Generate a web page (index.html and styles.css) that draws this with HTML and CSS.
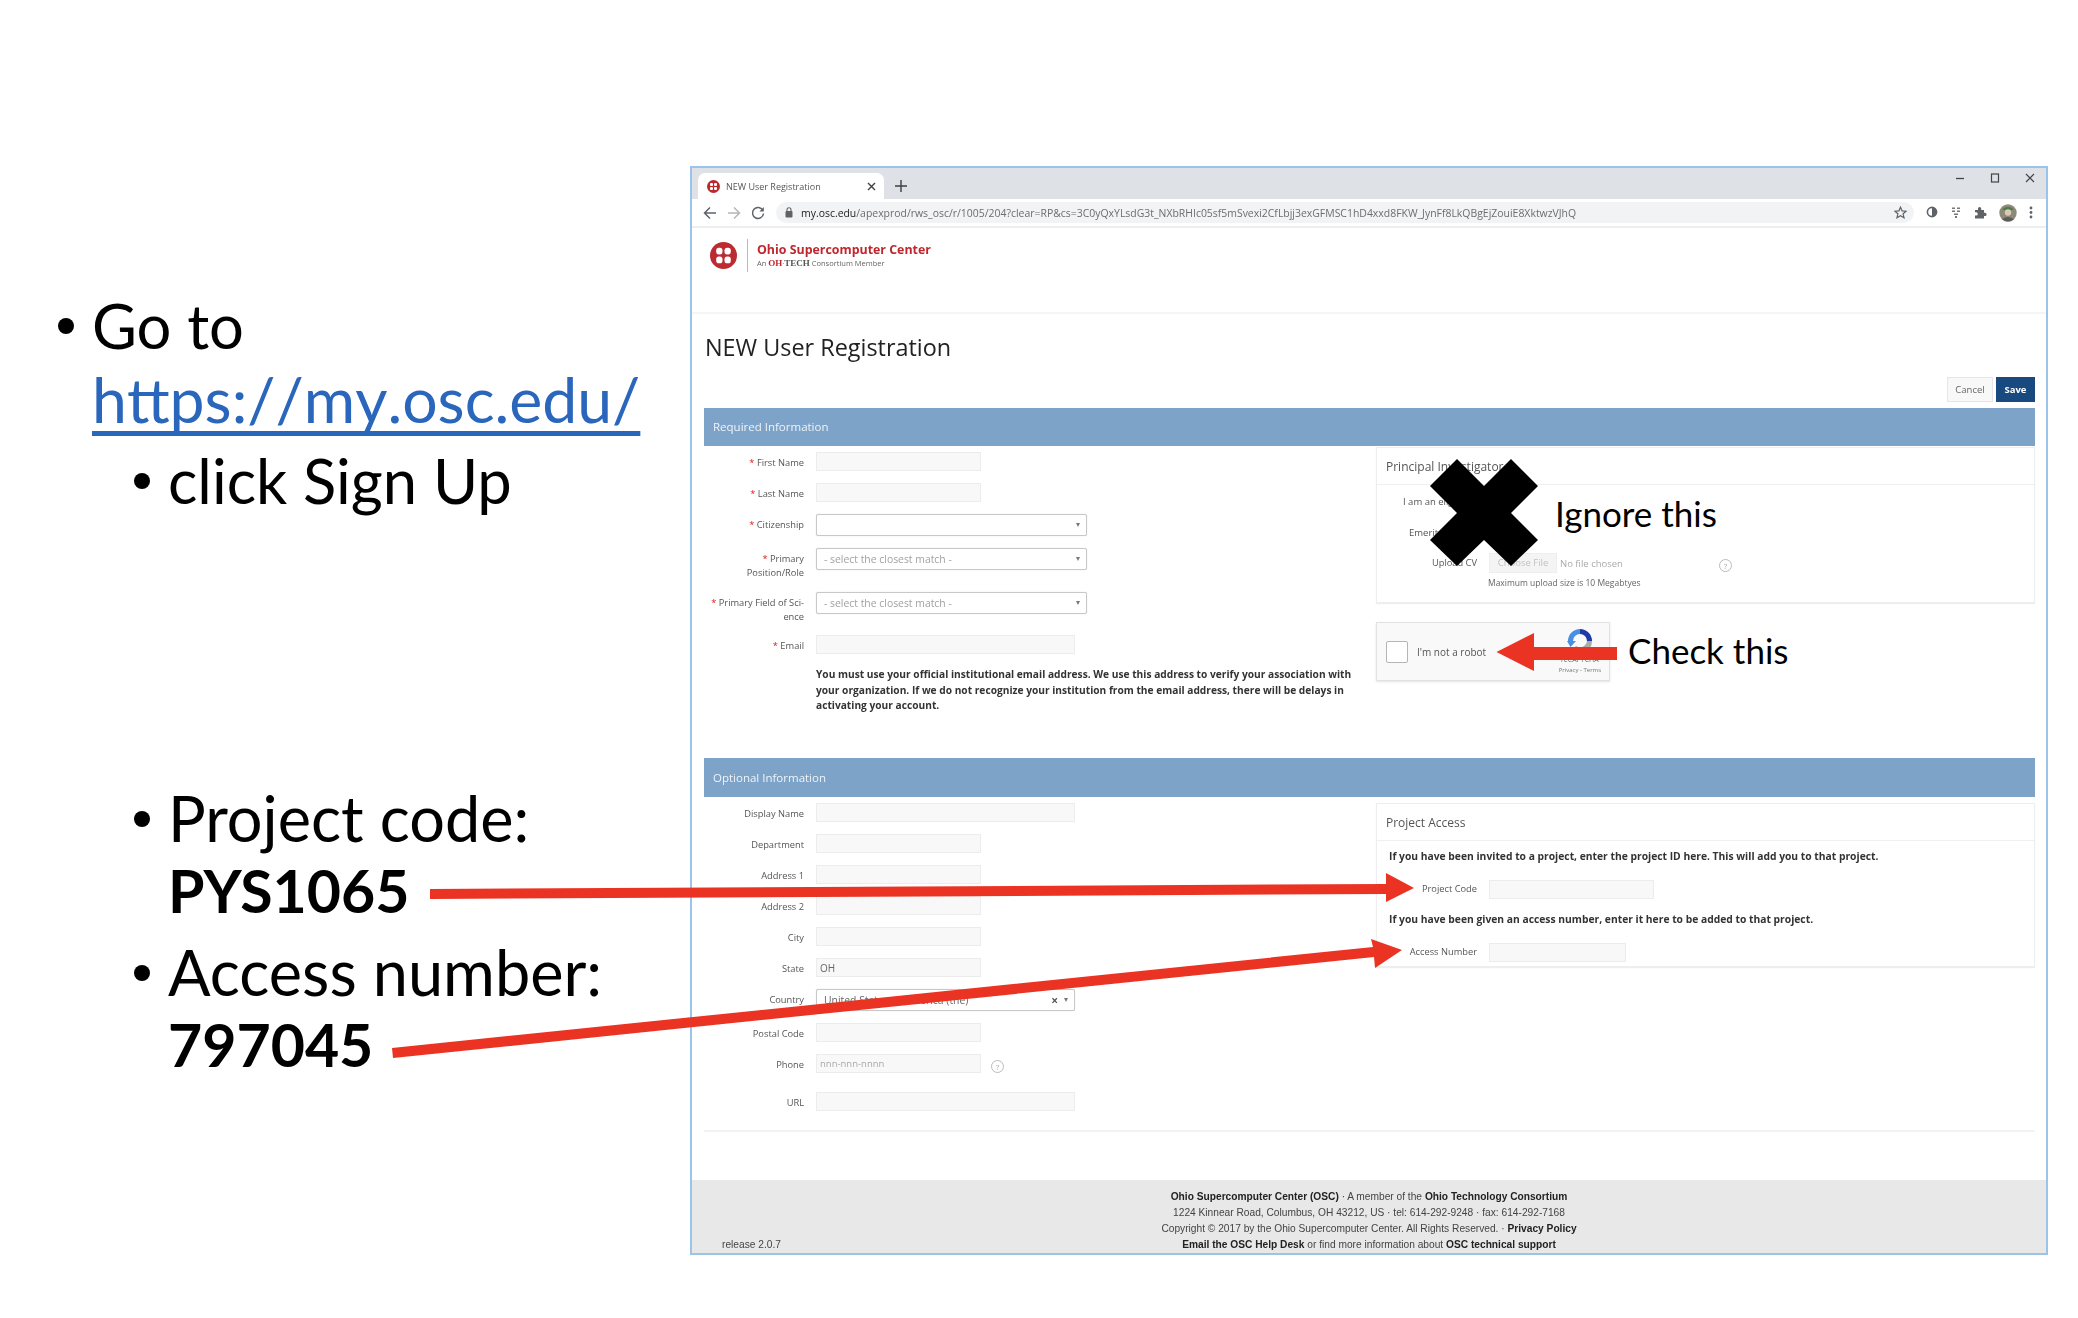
FILE: index.html
```html
<!DOCTYPE html>
<html>

<head>
    <meta charset="utf-8">
    <title>NEW User Registration</title>
    <link rel="stylesheet" href="styles.css">
</head>

<body>

<div class="slide">

    <!-- left side of the slide -->
    <div class="notes">
        <div class="item">
            <div>
                <div>Go to</div>
                <div><a class="link">https://my.osc.edu/</a></div>
            </div>
        </div>
        <div class="item sub"><div>click Sign Up</div></div>
        <div class="item sub gap-big big">
            <div>
                <div>Project code:</div>
                <div><b>PYS1065</b></div>
            </div>
        </div>
        <div class="item sub gap-small big">
            <div>
                <div>Access number:</div>
                <div><b>797045</b></div>
            </div>
        </div>
    </div>

    <!-- screenshot of the browser -->
    <div class="browser">

        <div class="tabstrip">
            <div class="tab">
                <svg class="favicon" width="13" height="13" viewBox="0 0 26 26"><circle cx="13" cy="13" r="13" fill="#c0272d"/><rect x="6" y="6" width="6" height="6" rx="2" fill="#fff"/><rect x="14" y="6" width="6" height="6" rx="2" fill="#fff"/><rect x="6" y="14" width="6" height="6" rx="2" fill="#fff"/><rect x="14" y="14" width="6" height="6" rx="2" fill="#fff"/></svg>
                <span class="tab-title">NEW User Registration</span>
                <svg class="tab-close" width="9" height="9" viewBox="0 0 9 9"><path d="M1 1 8 8M8 1 1 8" stroke="#3c4043" stroke-width="1.4"/></svg>
            </div>
            <svg class="tab-new" width="12" height="12" viewBox="0 0 12 12"><path d="M6 0V12M0 6H12" stroke="#3c4043" stroke-width="1.4"/></svg>
            <div class="winctl">
                <svg width="10" height="10" viewBox="0 0 10 10"><path d="M1 5.500H9" stroke="#444" stroke-width="1.3"/></svg>
                <svg width="10" height="10" viewBox="0 0 10 10"><rect x="1.5" y="1" width="7" height="8" fill="none" stroke="#444" stroke-width="1.2"/></svg>
                <svg width="10" height="10" viewBox="0 0 10 10"><path d="M1 1 9 9M9 1 1 9" stroke="#444" stroke-width="1.1"/></svg>
            </div>
        </div>

        <div class="toolbar">
            <svg width="14" height="14" viewBox="0 0 14 14"><path d="M13 7H2M7 1.500 1.500 7 7 12.500" fill="none" stroke="#5f6368" stroke-width="1.5"/></svg>
            <svg width="14" height="14" viewBox="0 0 14 14"><path d="M1 7H12M7 1.500 12.500 7 7 12.500" fill="none" stroke="#b4b7bb" stroke-width="1.5"/></svg>
            <svg width="14" height="14" viewBox="0 0 14 14"><path d="M11.800 4.200A5.500 5.500 0 1 0 12.500 7.500" fill="none" stroke="#5f6368" stroke-width="1.5"/><path d="M12.800 1V5.400H8.400Z" fill="#5f6368"/></svg>
            <div class="address">
                <svg width="8" height="11" viewBox="0 0 8 11"><rect x="0.5" y="4" width="7" height="6.5" rx="1" fill="#5f6368"/><path d="M2 4.500V2.800a2 2 0 0 1 4 0V4.500" fill="none" stroke="#5f6368" stroke-width="1.1"/></svg>
                <span class="url"><span class="url-host">my.osc.edu</span>/apexprod/rws_osc/r/1005/204?clear=RP&amp;cs=3C0yQxYLsdG3t_NXbRHIc05sf5mSvexi2CfLbjj3exGFMSC1hD4xxd8FKW_JynFf8LkQBgEjZouiE8XktwzVJhQ</span>
                <svg class="star" width="13" height="13" viewBox="0 0 14 14"><path d="M7 1.300 8.700 5.200 13 5.600 9.800 8.400 10.800 12.600 7 10.400 3.200 12.600 4.200 8.400 1 5.600 5.300 5.200Z" fill="none" stroke="#5f6368" stroke-width="1.3"/></svg>
            </div>
            <div class="ext">
                <svg width="12" height="13" viewBox="0 0 12 13"><circle cx="6" cy="6" r="4.600" fill="#fff" stroke="#5f6368" stroke-width="1.6"/><path d="M6 1.500A4.500 4.500 0 0 1 6 10.500Z" fill="#5f6368"/></svg>
                <svg width="12" height="13" viewBox="0 0 12 13"><path d="M2 1.500H5V3H2ZM7 1.500H10V3H7ZM2 4.500H5V6H2ZM7 4.500H10V6H7ZM4 7.500H8V9H4ZM5 10H7V12H5Z" fill="#777"/></svg>
                <svg width="13" height="13" viewBox="0 0 13 13"><path d="M1 4H4V2.500a1.600 1.600 0 0 1 3.200 0V4H10V6.800H11a1.600 1.600 0 0 1 0 3.200H10V12.500H1V9.500H2.200a1.600 1.600 0 0 0 0-3.200H1Z" fill="#5f6368"/></svg>
                <svg width="18" height="18" viewBox="0 0 18 18"><circle cx="9" cy="9" r="8.700" fill="#8d8a78"/><path d="M3 5.500A8.700 8.700 0 0 1 15 5.500L12 6 6 6Z" fill="#4e7a45"/><circle cx="9" cy="8.500" r="3.200" fill="#d8c8b8"/><path d="M3.500 15.500C5 12 13 12 14.500 15.500A8.700 8.700 0 0 1 3.500 15.500Z" fill="#5c5c5c"/></svg>
                <svg width="4" height="13" viewBox="0 0 4 13"><circle cx="2" cy="2" r="1.400" fill="#5f6368"/><circle cx="2" cy="6.500" r="1.400" fill="#5f6368"/><circle cx="2" cy="11" r="1.400" fill="#5f6368"/></svg>
            </div>
        </div>

        <div class="site-header">
            <svg class="site-logo" width="27" height="27" viewBox="0 0 26 26"><circle cx="13" cy="13" r="13" fill="#bd2b32"/><rect x="6" y="5.500" width="6" height="6.500" rx="2.500" fill="#fff"/><rect x="14" y="5.500" width="6" height="6.500" rx="2.500" fill="#fff"/><rect x="6" y="14" width="6" height="6.500" rx="2.500" fill="#fff"/><rect x="14" y="14" width="6" height="6.500" rx="2.500" fill="#fff"/></svg>
            <div class="site-name">
                <div class="site-title">Ohio Supercomputer Center</div>
                <div class="site-sub">An <span class="oh">OH</span>·<span class="tech">TECH</span> Consortium Member</div>
            </div>
        </div>

        <div class="page">

            <h1 class="page-title">NEW User Registration</h1>

            <div class="actions">
                <span class="btn btn-cancel">Cancel</span>
                <span class="btn btn-save">Save</span>
            </div>

            <div class="bar">Required Information</div>
            <div class="columns columns-req">
                <div class="col-left">
                    <div class="row"><label class="lbl"><i>*</i> First Name</label><span class="field w165"></span></div>
                    <div class="row"><label class="lbl"><i>*</i> Last Name</label><span class="field w165"></span></div>
                    <div class="row"><label class="lbl"><i>*</i> Citizenship</label><span class="select w271"></span></div>
                    <div class="row tall"><label class="lbl"><i>*</i> Primary Position/Role</label><span class="select w271">- select the closest match -</span></div>
                    <div class="row tall-b"><label class="lbl"><i>*</i> Primary Field of Sci-<br>ence</label><span class="select w271">- select the closest match -</span></div>
                    <div class="row"><label class="lbl"><i>*</i> Email</label><span class="field w259"></span></div>
                    <p class="note">You must use your official institutional email address. We use this address to verify your association with<br>your organization. If we do not recognize your institution from the email address, there will be delays in<br>activating your account.</p>
                </div>
                <div class="col-right">
                    <div class="panel panel-pi">
                        <div class="panel-head">Principal Investigator</div>
                        <div class="panel-body">
                            <div class="pi-row">I am an eligible PI</div>
                            <div class="pi-row">Emeritus PI</div>
                            <div class="upload">
                                <label class="lbl">Upload CV</label>
                                <span class="choose">Choose File</span>
                                <span class="nofile">No file chosen</span>
                                <span class="help help-cv">?</span>
                            </div>
                            <div class="maxsize">Maximum upload size is 10 Megabtyes</div>
                        </div>
                    </div>
                    <div class="captcha">
                        <span class="captcha-box"></span>
                        <span class="captcha-text">I'm not a robot</span>
                        <div class="captcha-brand">
                            <svg width="26" height="26" viewBox="0 0 26 26"><path d="M13 1A12 12 0 0 1 25 13L20 13A7 7 0 0 0 13 6Z" fill="#1c3aa9"/><path d="M1 13A12 12 0 0 1 13 1V6A7 7 0 0 0 6 13L9 13 3.500 19 0 13Z" fill="#4a90e2"/><path d="M25 13A12 12 0 0 1 5 22L9 18A7 7 0 0 0 20 13Z" fill="#ababab"/></svg>
                            <div class="captcha-name">reCAPTCHA</div>
                            <div class="captcha-links">Privacy - Terms</div>
                        </div>
                    </div>
                </div>
            </div>

            <div class="bar bar-opt">Optional Information</div>
            <div class="columns">
                <div class="col-left">
                    <div class="row"><label class="lbl">Display Name</label><span class="field w259"></span></div>
                    <div class="row"><label class="lbl">Department</label><span class="field w165"></span></div>
                    <div class="row"><label class="lbl">Address 1</label><span class="field w165"></span></div>
                    <div class="row"><label class="lbl">Address 2</label><span class="field w165"></span></div>
                    <div class="row"><label class="lbl">City</label><span class="field w165"></span></div>
                    <div class="row"><label class="lbl">State</label><span class="field w165">OH</span></div>
                    <div class="row"><label class="lbl">Country</label><span class="select select-country w259">United States of America (the)<span class="clear">×</span></span></div>
                    <div class="row"><label class="lbl">Postal Code</label><span class="field w165"></span></div>
                    <div class="row phone"><label class="lbl">Phone</label><span class="field w165 hint">nnn-nnn-nnnn</span><span class="help">?</span></div>
                    <div class="row"><label class="lbl">URL</label><span class="field w259"></span></div>
                </div>
                <div class="col-right">
                    <div class="panel panel-access">
                        <div class="panel-head">Project Access</div>
                        <div class="panel-body">
                            <p class="access-note">If you have been invited to a project, enter the project ID here. This will add you to that project.</p>
                            <div class="access-row"><label class="lbl">Project Code</label><span class="field w165"></span></div>
                            <p class="access-note">If you have been given an access number, enter it here to be added to that project.</p>
                            <div class="access-row"><label class="lbl">Access Number</label><span class="field w137"></span></div>
                        </div>
                    </div>
                </div>
            </div>

            <div class="rule"></div>
        </div>

        <div class="footer">
            <div class="release">release 2.0.7</div>
            <div class="footer-text">
                <div><b>Ohio Supercomputer Center (OSC)</b> · A member of the <b>Ohio Technology Consortium</b></div>
                <div>1224 Kinnear Road, Columbus, OH 43212, US · tel: 614-292-9248 · fax: 614-292-7168</div>
                <div>Copyright © 2017 by the Ohio Supercomputer Center. All Rights Reserved. · <b>Privacy Policy</b></div>
                <div><b>Email the OSC Help Desk</b> or find more information about <b>OSC technical support</b></div>
            </div>
        </div>
    </div>

    <!-- things drawn on top of the slide -->
    <svg class="overlay" width="2078" height="1318" viewBox="0 0 2078 1318">
        <path d="M1457 459 1484 486 1511 459 1538 486 1511 513 1538 540 1511 566 1484 540 1457 566 1430 540 1457 513 1430 486Z" fill="#000"/>
        <path d="M1617 647H1534V633L1496.500 652 1534 671V660H1617Z" fill="#ea3323"/>
        <path d="M430 889 1386 884V873L1414 888 1386 902V894L430 899Z" fill="#ea3323"/>
        <path d="M392 1048 1373 947 1371 939 1402 950 1375 968 1374 957 393 1058Z" fill="#ea3323"/>
    </svg>
    <div class="callout callout-ignore">Ignore this</div>
    <div class="callout callout-check">Check this</div>

</div>

</body>

</html>
```

FILE: styles.css
```css
body {
    margin: 0;
    background-color: #ffffff;
    font-family: "Open Sans", sans-serif;
}

.slide {
    position: relative;
    display: flex;
    width: 2078px;
    height: 1318px;
    overflow: hidden;
}

/* left column */
.notes {
    box-sizing: border-box;
    flex: none;
    width: 690px;
    padding: 289px 0 0 58px;
    font-family: Lato, sans-serif;
    font-size: 61.5px;
    line-height: 73px;
    color: #000000;
}
.big {
    font-size: 63px;
    line-height: 71px;
}
.notes b {
    font-size: 59px;
}
.item {
    display: flex;
    gap: 18px;
}
.item::before {
    content: "";
    flex: none;
    width: 16px;
    height: 16px;
    margin-top: 29px;
    border-radius: 50%;
    background-color: #000000;
}
.sub {
    margin: 8px 0 0 76px;
}
.gap-big {
    margin-top: 265px;
}
.gap-small {
    margin-top: 10px;
}
.link {
    color: #2a66bb;
    font-size: 62.5px;
    font-kerning: none;
    text-decoration: underline 5px;
    text-decoration-skip-ink: none;
    text-underline-offset: 8px;
}

/* browser window */
.browser {
    display: flex;
    flex-direction: column;
    flex: none;
    box-sizing: border-box;
    width: 1358px;
    height: 1089px;
    margin-top: 166px;
    border: 2px solid #9cc3ea;
    background-color: #ffffff;
    color: #555555;
    filter: blur(0.4px);
}
.browser svg {
    flex: none;
}
.tabstrip {
    display: flex;
    align-items: center;
    flex: none;
    height: 31px;
    background-color: #dee1e6;
}
.tab {
    display: flex;
    align-items: center;
    box-sizing: border-box;
    width: 186px;
    height: 26px;
    margin: 5px 0 0 6px;
    padding: 0 8px 0 9px;
    border-radius: 7px 7px 0 0;
    background-color: #ffffff;
}
.tab-title {
    margin-left: 6px;
    font-size: 9px;
    color: #555555;
}
.tab-close {
    margin-left: auto;
}
.tab-new {
    margin: 5px 0 0 11px;
}
.winctl {
    display: flex;
    gap: 25px;
    margin: -11px 11px 0 auto;
}
.toolbar {
    display: flex;
    align-items: center;
    flex: none;
    gap: 10px;
    box-sizing: border-box;
    height: 29px;
    padding: 0 0 0 11px;
    border-bottom: 2px solid #eceef0;
}
.address {
    display: flex;
    align-items: center;
    flex: none;
    box-sizing: border-box;
    width: 1138px;
    height: 21px;
    margin-left: 1px;
    padding: 0 7px 0 9px;
    border-radius: 11px;
    background-color: #f1f3f4;
}
.url {
    margin-left: 8px;
    font-size: 10.45px;
    color: #6b6e72;
    white-space: nowrap;
}
.url-host {
    color: #202124;
}
.star {
    margin-left: auto;
}
.ext {
    display: flex;
    align-items: center;
    gap: 12px;
    margin-left: 2px;
}
.site-header {
    display: flex;
    align-items: center;
    flex: none;
    box-sizing: border-box;
    height: 86px;
    padding: 0 0 30px 18px;
    border-bottom: 2px solid #f5f5f5;
}
.site-logo {
    margin-right: 10px;
}
.site-name {
    height: 33px;
    padding-left: 9px;
    border-left: 1px solid #bbbbbb;
}
.site-title {
    margin-top: 3px;
    font-size: 12.4px;
    font-weight: 700;
    line-height: 16px;
    color: #c0272d;
    white-space: nowrap;
}
.site-sub {
    font-size: 7.5px;
    line-height: 11px;
    color: #666666;
}
.oh {
    font-family: "Liberation Serif", serif;
    font-size: 9px;
    font-weight: 700;
    color: #c0272d;
}
.tech {
    font-family: "Liberation Serif", serif;
    font-size: 9px;
    font-weight: 700;
    color: #555555;
}
.page {
    flex: 1;
    padding: 0 11px 0 12px;
}
.page-title {
    box-sizing: border-box;
    height: 63px;
    margin: 0;
    padding: 17px 0 0 1px;
    font-size: 23.4px;
    font-weight: 400;
    line-height: 32px;
    color: #222222;
}
.actions {
    display: flex;
    justify-content: flex-end;
    gap: 3px;
    height: 25px;
    margin-bottom: 6px;
}
.btn {
    display: flex;
    align-items: center;
    justify-content: center;
    box-sizing: border-box;
    font-size: 9.5px;
}
.btn-cancel {
    width: 46px;
    border: 1px solid #e6e6e6;
    background-color: #f8f8f8;
    color: #666666;
}
.btn-save {
    width: 39px;
    background-color: #184a80;
    color: #ffffff;
    font-weight: 700;
}
.bar {
    box-sizing: border-box;
    height: 38px;
    padding-left: 9px;
    background-color: #7da3c8;
    color: #eef3f8;
    font-size: 11.5px;
    line-height: 38px;
}
.bar-opt {
    height: 39px;
    line-height: 39px;
}
.columns {
    display: flex;
}
.columns-req {
    height: 312px;
}
.col-left {
    flex: none;
    width: 672px;
    padding-top: 6px;
}
.col-right {
    flex: 1;
}

/* form rows */
.row {
    display: flex;
    align-items: flex-start;
    margin-bottom: 12px;
}
.tall {
    height: 32px;
}
.tall-b {
    height: 31px;
}
.phone {
    height: 26px;
}
.lbl {
    flex: none;
    box-sizing: border-box;
    width: 100px;
    margin-right: 12px;
    padding-top: 3.5px;
    font-size: 9.3px;
    line-height: 14px;
    text-align: right;
    color: #555555;
}
.lbl i {
    font-style: normal;
    color: #e0141c;
}
.field {
    box-sizing: border-box;
    height: 19px;
    padding-left: 3px;
    border: 1px solid #ececec;
    background-color: #f8f8f8;
    font-size: 10px;
    line-height: 18px;
    color: #666666;
}
.w137 { width: 137px; }
.w165 { width: 165px; }
.w259 { width: 259px; }
.w271 { width: 271px; }
.hint {
    color: #aaaaaa;
    font-size: 9.5px;
}
.select {
    position: relative;
    box-sizing: border-box;
    height: 22px;
    padding-left: 7px;
    border: 1px solid #c8c8c8;
    border-radius: 2px;
    box-shadow: 0 0 1px #cccccc;
    background-color: #ffffff;
    font-size: 10.4px;
    line-height: 21px;
    color: #a2a2a2;
}
.select::after {
    content: "";
    position: absolute;
    top: 8px;
    right: 6px;
    border-top: 4px solid #777777;
    border-left: 2.5px solid transparent;
    border-right: 2.5px solid transparent;
}
.select-country {
    color: #666666;
}
.clear {
    position: absolute;
    top: 0;
    right: 16px;
    font-size: 12px;
    font-weight: 700;
    color: #555555;
}
.note {
    margin: 0 0 0 112px;
    padding-top: 1px;
    font-size: 10.2px;
    font-weight: 700;
    line-height: 15.6px;
    color: #333333;
    white-space: nowrap;
}
.help {
    flex: none;
    box-sizing: border-box;
    width: 13px;
    height: 13px;
    margin: 6px 0 0 10px;
    border: 1px solid #bbbbbb;
    border-radius: 50%;
    font-size: 8px;
    line-height: 11px;
    text-align: center;
    color: #aaaaaa;
}

/* right panels */
.panel {
    box-sizing: border-box;
    margin-top: 1px;
    border: 1px solid #eeeeee;
    box-shadow: 0 1px 1px #eeeeee;
}
.panel-pi {
    height: 156px;
}
.panel-access {
    height: 164px;
    margin-top: 6px;
}
.panel-head {
    box-sizing: border-box;
    height: 37px;
    padding-left: 9px;
    border-bottom: 1px solid #f0f0f0;
    font-size: 12px;
    line-height: 37px;
    color: #555555;
}
.pi-row {
    height: 31px;
    padding-left: 26px;
    font-size: 9.5px;
    line-height: 34px;
}
.pi-row + .pi-row {
    padding-left: 32px;
}
.upload {
    display: flex;
    align-items: center;
    height: 20px;
    margin-top: 6px;
}
.upload .lbl {
    padding-top: 0;
}
.choose {
    box-sizing: border-box;
    width: 68px;
    height: 20px;
    border: 1px solid #eeeeee;
    background-color: #f4f4f4;
    font-size: 9.5px;
    line-height: 18px;
    text-align: center;
    color: #c2c2c2;
}
.nofile {
    margin-left: 3px;
    font-size: 9.5px;
    color: #aaaaaa;
}
.help-cv {
    margin: 4px 0 0 96px;
}
.maxsize {
    margin: 3px 0 0 111px;
    font-size: 8.5px;
    line-height: 14px;
    color: #666666;
}
.captcha {
    display: flex;
    align-items: center;
    box-sizing: border-box;
    width: 234px;
    height: 59px;
    margin-top: 19px;
    padding: 0 8px 0 9px;
    border: 1px solid #e2e2e2;
    background-color: #f9f9f9;
    box-shadow: 0 1px 2px #e4e4e4;
}
.captcha-box {
    box-sizing: border-box;
    width: 22px;
    height: 22px;
    border: 1px solid #b5b5b5;
    border-radius: 2px;
    background-color: #ffffff;
}
.captcha-text {
    margin-left: 9px;
    font-size: 10px;
    color: #555555;
}
.captcha-brand {
    display: flex;
    flex-direction: column;
    align-items: center;
    margin: 0 0 0 auto;
}
.captcha-name {
    margin-top: 1px;
    font-size: 7px;
    line-height: 10px;
    color: #666666;
}
.captcha-links {
    font-size: 6px;
    line-height: 10px;
    color: #777777;
}
.access-note {
    margin: 0;
    padding-left: 12px;
    font-size: 10.3px;
    font-weight: 700;
    line-height: 15px;
    color: #333333;
    white-space: nowrap;
}
.panel-body .access-note:first-child {
    margin-top: 8px;
}
.access-row {
    display: flex;
    margin: 16px 0 13px;
}
.access-row .lbl {
    padding-top: 1.5px;
}
.rule {
    height: 2px;
    margin-top: 7px;
    background-color: #f3f3f3;
}

/* footer */
.footer {
    display: grid;
    grid-template-columns: 1fr auto 1fr;
    align-items: end;
    flex: none;
    box-sizing: border-box;
    height: 73px;
    background-color: #e8e8e8;
    font-family: "Liberation Sans", Arial, sans-serif;
    font-size: 10.2px;
    line-height: 16px;
    color: #444444;
}
.release {
    margin-left: 30px;
}
.footer-text {
    text-align: center;
    white-space: nowrap;
}
.footer-text b {
    color: #222222;
}

/* annotations on top of the slide */
.overlay {
    position: absolute;
    top: 0;
    left: 0;
}
.callout {
    position: absolute;
    font-family: Lato, sans-serif;
    font-size: 35px;
    line-height: 40px;
    color: #000000;
    white-space: nowrap;
}
.callout-ignore {
    top: 493px;
    left: 1555px;
}
.callout-check {
    top: 630px;
    left: 1628px;
}
```
